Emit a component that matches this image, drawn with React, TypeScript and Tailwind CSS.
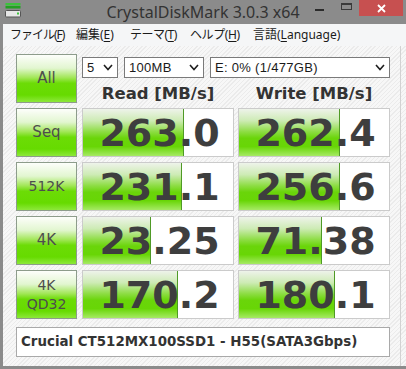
import React from "react";

const ROWS = [
    { label: ["Seq"], read: "263.0", write: "262.4" },
    { label: ["512K"], read: "231.1", write: "256.6" },
    { label: ["4K"], read: "23.25", write: "71.38" },
    { label: ["4K", "QD32"], read: "170.2", write: "180.1" },
];

const MENU = [
    { pre: "ファイル(", key: "F", post: ")", cls: "w-[66px] tracking-[-1px]" },
    { pre: "編集(", key: "E", post: ")", cls: "w-[54px]" },
    { pre: "テーマ(", key: "T", post: ")", cls: "w-[60px] tracking-[-0.5px]" },
    { pre: "ヘルプ(", key: "H", post: ")", cls: "w-[63px] tracking-[-0.4px]" },
    { pre: "言語(", key: "L", post: "anguage)", cls: "" },
];

function AppIcon() {
    return (
        <svg width="16" height="16" viewBox="0 0 16 16">
            <rect x="0.5" y="1" width="15" height="2.5" fill="#3cc23c" />
            <rect x="0.5" y="4" width="15" height="2.5" fill="#22a022" />
            <rect x="0.5" y="8.5" width="15" height="6.5" rx="1" fill="#e6e6e6" stroke="#555" />
            <rect x="12" y="10.5" width="2" height="2" fill="#3cc23c" />
        </svg>
    );
}

function Chevron() {
    return (
        <svg width="10" height="7" viewBox="0 0 10 7" className="shrink-0">
            <polyline points="1,1 5,5.5 9,1" fill="none" stroke="#1e1e1e" strokeWidth="1.6" />
        </svg>
    );
}

function Select({ text, cls }: { text: string; cls: string }) {
    return (
        <div className={`${cls} h-[21px] bg-white border border-[#7a7a7a] flex items-center justify-between pl-[4px] pr-[4px] font-['Liberation_Sans',sans-serif] text-[13px] tracking-[0.3px] text-[#1a1a1a]`}>
            <span>{text}</span>
            <Chevron />
        </div>
    );
}

function GreenButton({ lines }: { lines: string[] }) {
    return (
        <div className="w-[61px] h-full shrink-0 border border-[#8d9c8b] bg-[linear-gradient(to_bottom,#fdfefb_0%,#e2f6d0_28%,#a2e758_48%,#6cdc06_60%,#66db00_85%,#8de83a_100%)] flex flex-col items-center justify-center text-[#4d4d4d] leading-[19px]">
            {lines.map((l) => (
                <span key={l} className={lines.length > 1 || l.length > 3 ? "text-[14px]" : "text-[15px]"}>
                    {l}
                </span>
            ))}
        </div>
    );
}

function Cell({ value }: { value: string }) {
    const v = parseFloat(value);
    const ratio = 0.181 + 0.204 * Math.log10(v);
    const w = Math.round(151 * ratio) - 1;
    return (
        <div className="relative w-[152px] h-full shrink-0 border border-[#cbcbcb] bg-white flex items-center justify-center">
            <div
                className="absolute left-0 top-0 bottom-0 border-r border-[#4f9a26] bg-[linear-gradient(to_bottom,#eef3ea_0%,#cdebb4_25%,#8edd45_48%,#6ad50a_62%,#68d606_80%,#a6ea64_100%)]"
                style={{ width: `${w}px` }}
            />
            <span className="relative pl-[3px] text-[38px] font-bold leading-none text-[#3e3e3e]">{value}</span>
        </div>
    );
}

export default function App() {
    return (
        <div className="w-[406px] h-[369px] bg-[#8b8b8b] flex flex-col overflow-hidden font-['DejaVu_Sans',sans-serif]">
            {/* Title bar */}
            <div className="h-[24px] shrink-0 grid grid-cols-[1fr_auto_1fr] items-start">
                <div className="pl-[5px] pt-[2px]">
                    <AppIcon />
                </div>
                <div className="h-[24px] flex items-center font-['Noto_Sans',sans-serif] text-[16px] text-[#333]">
                    CrystalDiskMark 3.0.3 x64
                </div>
                <div className="flex justify-end pr-[3px]">
                    <div className="w-[27px] h-[16px] flex items-center justify-center">
                        <div className="w-[9px] h-[2px] mt-[4px] bg-[#2b2b2b]" />
                    </div>
                    <div className="w-[26px] h-[16px] flex items-start justify-center pt-[3px]">
                        <div className="w-[11px] h-[7px] border border-t-2 border-[#3a3a3a]" />
                    </div>
                    <div className="w-[44px] h-[16px] bg-[#c75050] flex items-center justify-center">
                        <svg width="9" height="9" viewBox="0 0 9 9">
                            <path d="M1 1 L8 8 M8 1 L1 8" stroke="#fff" strokeWidth="1.8" />
                        </svg>
                    </div>
                </div>
            </div>

            <div className="flex-1 flex flex-col pl-[3px] pb-[3px]">
                {/* Menu bar */}
                <div className="h-[22px] shrink-0 bg-[#f5f6f7] flex items-center pl-[7px] font-['Noto_Sans','Noto_Sans_CJK_JP',sans-serif] text-[12px] text-[#1a1a1a] whitespace-nowrap">
                    {MENU.map((m) => (
                        <span key={m.key} className={m.cls}>
                            {m.pre}
                            <u className="underline-offset-2">{m.key}</u>
                            {m.post}
                        </span>
                    ))}
                </div>

                {/* Client */}
                <div className="flex-1 flex bg-[repeating-linear-gradient(135deg,#f7f7f7_0px,#f7f7f7_2px,#ebebeb_2px,#ebebeb_3px)]">
                    <div className="w-[398px] border-r border-[#d2d2d2] pl-[13px] pt-[8px] flex flex-col">
                        <div className="h-[49px] flex">
                            <GreenButton lines={["All"]} />
                            <div className="ml-[5px] w-[308px] flex flex-col">
                                <div className="mt-[3px] flex gap-[6px]">
                                    <Select text="5" cls="w-[36px]" />
                                    <Select text="100MB" cls="w-[80px]" />
                                    <Select text="E: 0% (1/477GB)" cls="w-[180px]" />
                                </div>
                                <div className="flex-1 flex items-end gap-[4px] font-bold text-[16.5px] leading-[19px] text-[#333]">
                                    <div className="w-[152px] text-center">Read [MB/s]</div>
                                    <div className="w-[152px] text-center">Write [MB/s]</div>
                                </div>
                            </div>
                        </div>

                        {ROWS.map((r) => (
                            <div key={r.read} className="h-[49px] mt-[5px] flex">
                                <GreenButton lines={r.label} />
                                <div className="ml-[5px] flex gap-[4px] h-full">
                                    <Cell value={r.read} />
                                    <Cell value={r.write} />
                                </div>
                            </div>
                        ))}

                        <div className="mt-[8px] w-[374px] h-[30px] bg-white border border-[#a9a9a9] flex items-center pl-[4px] font-bold text-[13.4px] text-[#333]">
                            Crucial CT512MX100SSD1 - H55(SATA3Gbps)
                        </div>
                    </div>
                </div>
            </div>
        </div>
    );
}
